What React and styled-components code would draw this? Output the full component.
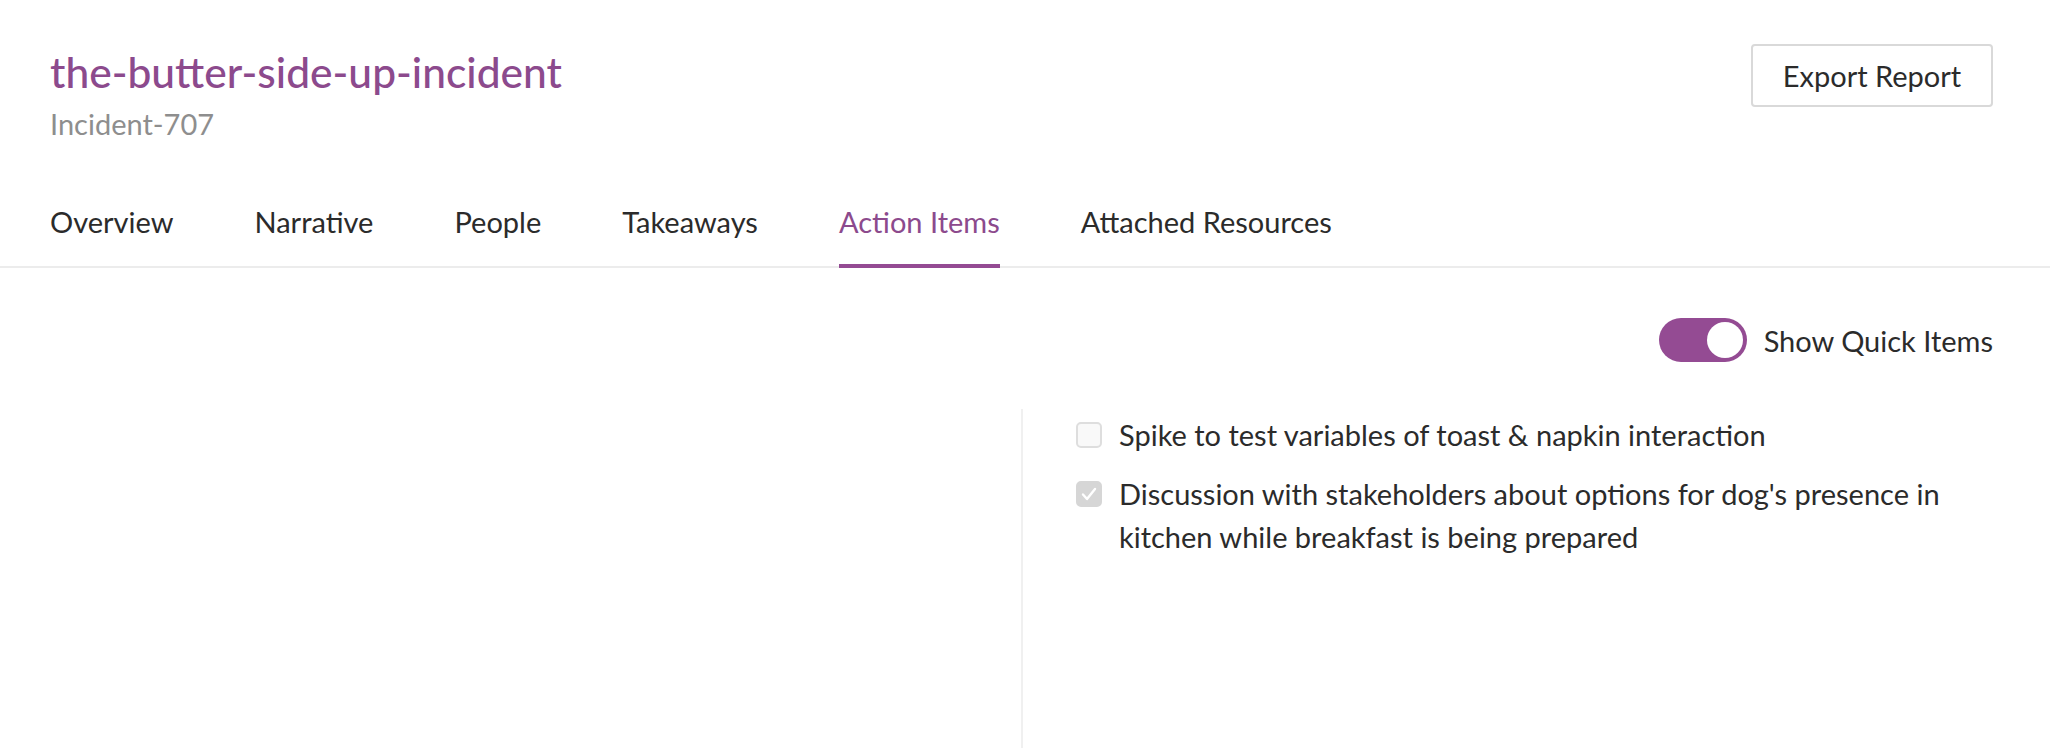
import React, { useState } from "react";
import styled, { createGlobalStyle } from "styled-components";

const GlobalStyle = createGlobalStyle`
  body {
    margin: 0;
    background: #ffffff;
    font-family: Lato, "Open Sans", sans-serif;
    color: #2b2b2b;
  }
`;

const Page = styled.div`
  width: 2050px;
  height: 748px;
  overflow: hidden;
  display: flex;
  flex-direction: column;
`;

const Header = styled.header`
  display: flex;
  justify-content: space-between;
  align-items: flex-start;
  padding: 44px 57px 0 50px;
`;

const TitleBlock = styled.div`
  display: flex;
  flex-direction: column;
  padding-top: 2px;
`;

const Title = styled.h1`
  margin: 0;
  font-size: 42.5px;
  font-weight: 500;
  line-height: 52px;
  color: #8c4a8d;
`;

const Subtitle = styled.div`
  font-size: 29px;
  line-height: 52px;
  color: #8e8e8e;
`;

const ExportButton = styled.button`
  width: 242px;
  height: 63px;
  background: #fff;
  border: 2px solid #d9d9d9;
  border-radius: 4px;
  font-family: inherit;
  font-size: 29px;
  color: #2b2b2b;
  cursor: pointer;
`;

const Tabs = styled.nav`
  display: flex;
  gap: 81px;
  padding: 0 50px;
  margin-top: 52px;
  border-bottom: 2px solid #ececec;
`;

const Tab = styled.div`
  font-size: 29px;
  line-height: 40px;
  padding-bottom: 22px;
  margin-bottom: -2px;
  color: ${(p) => (p.active ? "#8c4a8d" : "#2b2b2b")};
  border-bottom: 4px solid ${(p) => (p.active ? "#944b93" : "transparent")};
  cursor: pointer;
`;

const Content = styled.section`
  flex: 1;
  display: flex;
  flex-direction: column;
`;

const ToggleRow = styled.div`
  display: flex;
  justify-content: flex-end;
  align-items: center;
  gap: 17px;
  padding: 50px 57px 0 0;
`;

const Switch = styled.button`
  width: 88px;
  height: 44px;
  border: none;
  border-radius: 22px;
  padding: 4px;
  background: ${(p) => (p.on ? "#944b93" : "#cccccc")};
  display: flex;
  justify-content: ${(p) => (p.on ? "flex-end" : "flex-start")};
  cursor: pointer;
`;

const Knob = styled.span`
  width: 36px;
  height: 36px;
  border-radius: 50%;
  background: #fff;
`;

const ToggleLabel = styled.span`
  font-size: 29px;
  color: #2b2b2b;
`;

const Columns = styled.div`
  flex: 1;
  display: flex;
  margin-top: 47px;
`;

const LeftColumn = styled.div`
  width: 1021px;
  border-right: 2px solid #f0f0f0;
`;

const RightColumn = styled.div`
  flex: 1;
  padding: 4px 57px 0 53px;
  display: flex;
  flex-direction: column;
  gap: 16px;
`;

const Item = styled.label`
  display: flex;
  align-items: flex-start;
  gap: 17px;
  font-size: 29px;
  line-height: 43px;
  color: #2b2b2b;
`;

const Box = styled.span`
  flex: none;
  width: 26px;
  height: 26px;
  margin-top: 9px;
  box-sizing: border-box;
  border-radius: 5px;
  border: 2px solid ${(p) => (p.checked ? "#d6d6d6" : "#dedede")};
  background: ${(p) => (p.checked ? "#d6d6d6" : "#f9f9f9")};
  display: flex;
  align-items: center;
  justify-content: center;
`;

const tabs = [
  "Overview",
  "Narrative",
  "People",
  "Takeaways",
  "Action Items",
  "Attached Resources",
];

const items = [
  { text: "Spike to test variables of toast & napkin interaction", done: false },
  {
    text: "Discussion with stakeholders about options for dog's presence in kitchen while breakfast is being prepared",
    done: true,
  },
];

function App() {
  const [active, setActive] = useState("Action Items");
  const [quick, setQuick] = useState(true);

  return (
    <>
      <GlobalStyle />
      <Page>
        <Header>
          <TitleBlock>
            <Title>the-butter-side-up-incident</Title>
            <Subtitle>Incident-707</Subtitle>
          </TitleBlock>
          <ExportButton>Export Report</ExportButton>
        </Header>
        <Tabs>
          {tabs.map((t) => (
            <Tab key={t} active={t === active} onClick={() => setActive(t)}>
              {t}
            </Tab>
          ))}
        </Tabs>
        <Content>
          <ToggleRow>
            <Switch on={quick} onClick={() => setQuick(!quick)}>
              <Knob />
            </Switch>
            <ToggleLabel>Show Quick Items</ToggleLabel>
          </ToggleRow>
          <Columns>
            <LeftColumn />
            <RightColumn>
              {items.map((it, i) => (
                <Item key={i}>
                  <Box checked={it.done}>
                    {it.done && (
                      <svg width="20" height="20" viewBox="0 0 20 20">
                        <path
                          d="M4 10.5l4 4.5L16 5"
                          fill="none"
                          stroke="#fff"
                          strokeWidth="2.4"
                          strokeLinecap="round"
                          strokeLinejoin="round"
                        />
                      </svg>
                    )}
                  </Box>
                  <span>{it.text}</span>
                </Item>
              ))}
            </RightColumn>
          </Columns>
        </Content>
      </Page>
    </>
  );
}

export default App;
